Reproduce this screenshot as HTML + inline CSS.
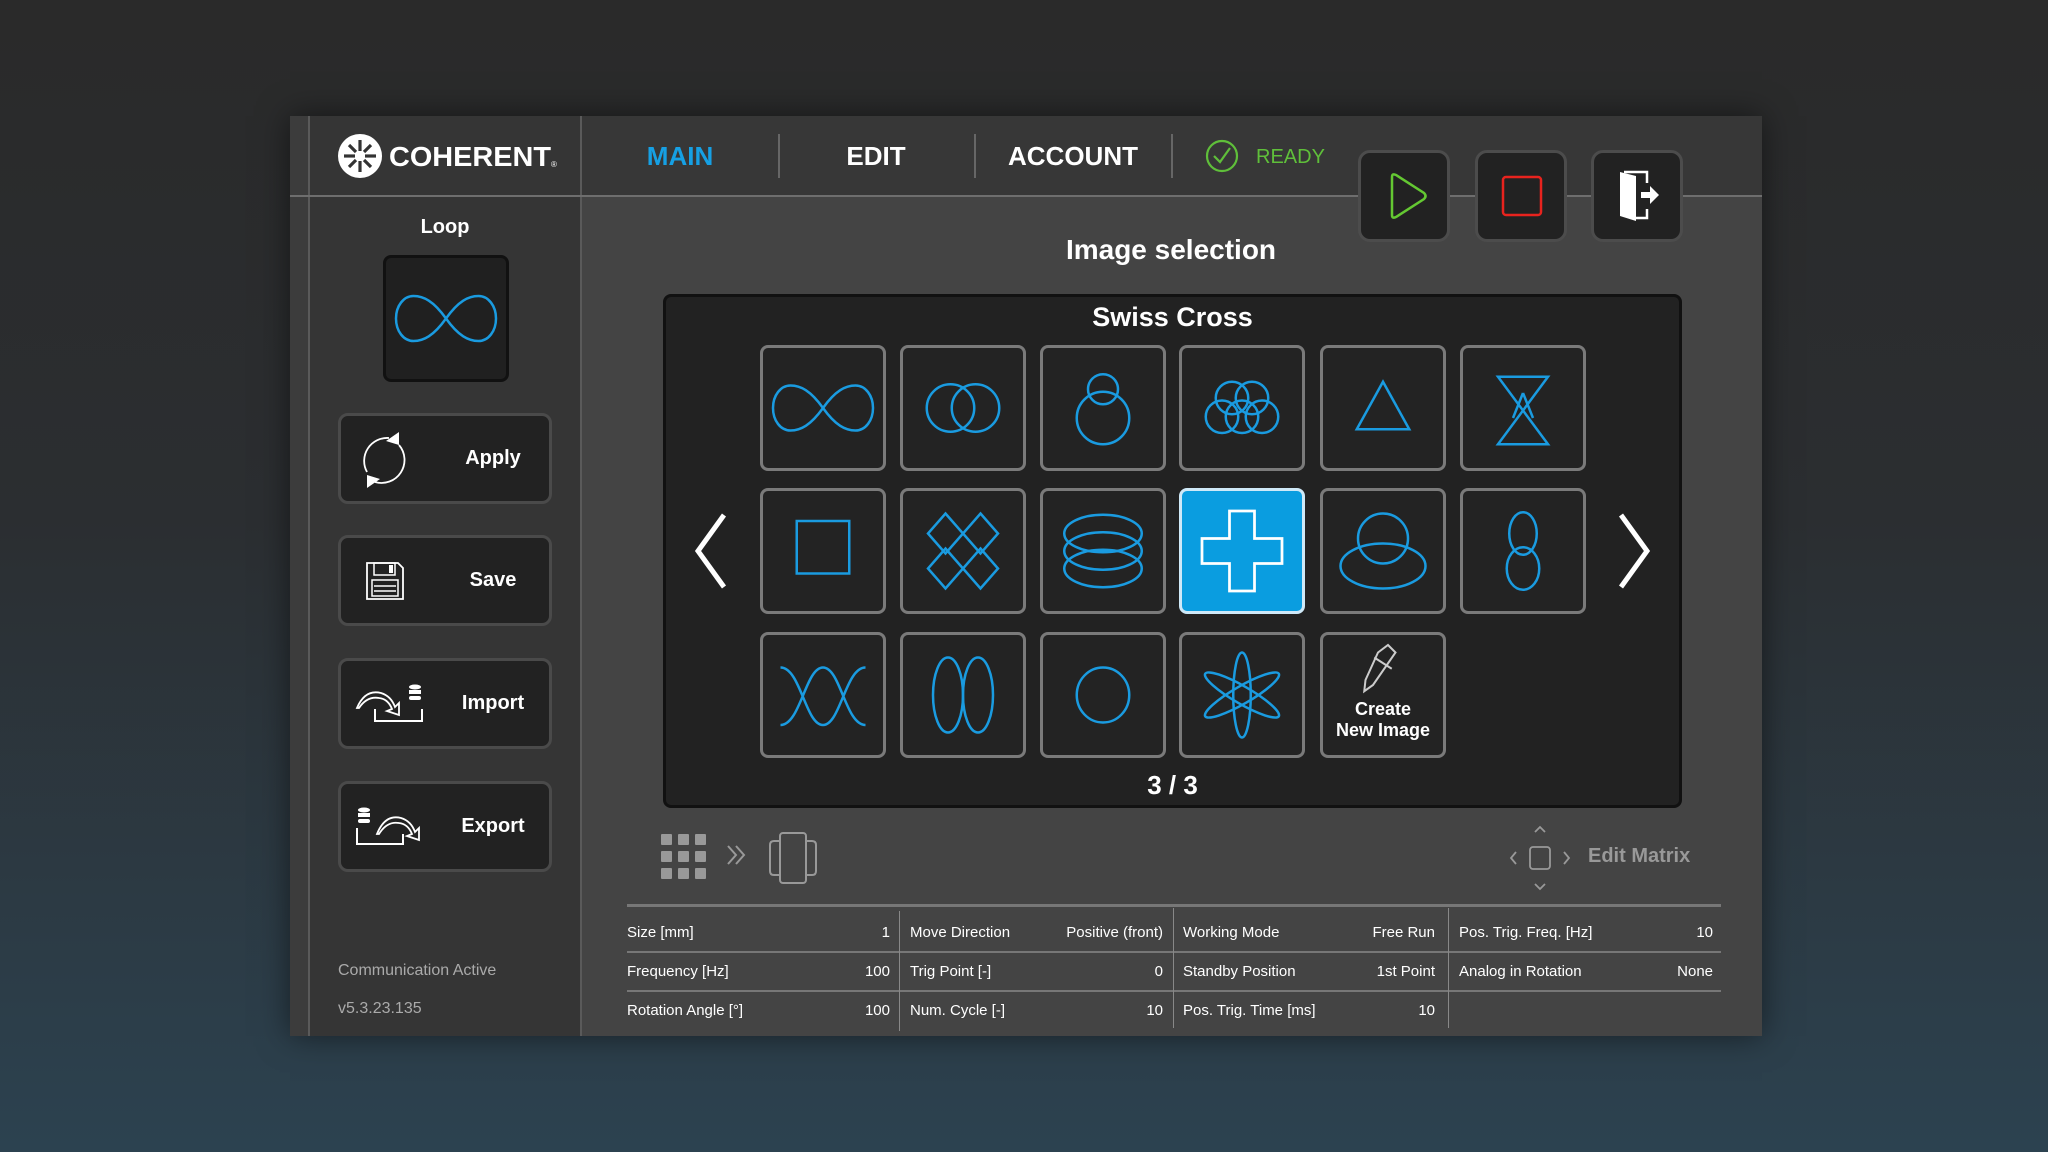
<!DOCTYPE html>
<html><head><meta charset="utf-8"><style>
*{margin:0;padding:0;box-sizing:border-box}
body{width:2048px;height:1152px;overflow:hidden;background:linear-gradient(180deg,#2a2a2a 0%,#2b2e31 45%,#2c4250 100%);font-family:"Liberation Sans Narrow","Liberation Sans",sans-serif;color:#fff;position:relative}
.a{position:absolute}
.panel{left:290px;top:116px;width:1472px;height:920px;background:#444;box-shadow:0 0 30px rgba(0,0,0,.5)}
.hdr{left:0;top:0;width:1472px;height:80px;background:#373737}
.side{left:18px;top:0;width:274px;height:920px;background:#353535;border-left:2px solid #5a5a5a;border-right:2px solid #5a5a5a}
.strip{left:0;top:0;width:18px;height:920px;background:#3c3c3c}
.hline{left:0;top:79px;width:1472px;height:2px;background:#6e6e6e}
.tab{top:12px;height:56px;font-size:26px;font-weight:bold;line-height:56px;text-align:center}
.sep{top:18px;width:2px;height:44px;background:#666}
.tb{width:92px;height:92px;background:#222;border:3px solid #4c4c4c;border-radius:12px}
.sb{left:48px;width:214px;height:91px;background:#222;border:3px solid #4a4a4a;border-radius:10px}
.sb span{position:absolute;left:112px;top:0;line-height:85px;font-size:20px;font-weight:bold;width:80px;text-align:center}
.tile{width:126px;height:126px;background:#232323;border:3px solid #7a7a7a;border-radius:8px}
.tile svg{position:absolute;left:0;top:0;width:120px;height:120px}
.sel{background:#0a9de0;border-color:#cfe9f8}
.row{left:337px;width:1094px;font-size:15px}
.cell{position:absolute;top:0;height:39px;line-height:39px}
</style></head><body>
<div class="a panel">
 <div class="a hdr"></div>
 <div class="a side"></div>
 <div class="a strip"></div>
 <div class="a hline"></div>
 <svg class="a" style="left:47px;top:11px" width="230" height="58" viewBox="0 0 230 58">
  <circle cx="23" cy="29" r="22" fill="#fff"/>
  <g stroke="#333" stroke-width="3.2">
   <line x1="23" y1="13" x2="23" y2="24"/><line x1="23" y1="34" x2="23" y2="45"/>
   <line x1="7" y1="29" x2="18" y2="29"/><line x1="28" y1="29" x2="39" y2="29"/>
   <line x1="12" y1="18" x2="19" y2="25"/><line x1="27" y1="33" x2="34" y2="40"/>
   <line x1="34" y1="18" x2="27" y2="25"/><line x1="19" y1="33" x2="12" y2="40"/>
  </g>
  <text x="52" y="39" font-family="Liberation Sans" font-weight="bold" font-size="28" fill="#fff" textLength="162" lengthAdjust="spacingAndGlyphs">COHERENT</text>
  <text x="214" y="40" font-family="Liberation Sans" font-size="8" fill="#fff">®</text>
 </svg>
 <div class="a tab" style="left:330px;width:120px;color:#16a0e4">MAIN</div>
 <div class="a sep" style="left:488px"></div>
 <div class="a tab" style="left:526px;width:120px">EDIT</div>
 <div class="a sep" style="left:684px"></div>
 <div class="a tab" style="left:713px;width:140px">ACCOUNT</div>
 <div class="a sep" style="left:881px"></div>
 <svg class="a" style="left:915px;top:23px" width="34" height="34" viewBox="0 0 34 34"><circle cx="17" cy="17" r="15" fill="none" stroke="#5fbf3a" stroke-width="2.2"/><path d="M9 17 L15 23 L25 9" fill="none" stroke="#5fbf3a" stroke-width="2.2"/></svg>
 <div class="a" style="left:966px;top:26px;font-size:20px;color:#5fbf3a;line-height:30px">READY</div>
 <div class="a tb" style="left:1068px;top:34px"><svg width="86" height="86" viewBox="0 0 86 86"><path d="M31 24 L31 62 Q31 66 35 64 L63 46 Q66 43 63 40 L35 22 Q31 20 31 24Z" fill="none" stroke="#64c832" stroke-width="2.5"/></svg></div>
 <div class="a tb" style="left:1185px;top:34px"><svg width="86" height="86" viewBox="0 0 86 86"><rect x="25" y="24" width="38" height="38" rx="3" fill="none" stroke="#e8231e" stroke-width="2.5"/></svg></div>
 <div class="a tb" style="left:1301px;top:34px"><svg width="86" height="86" viewBox="0 0 86 86"><path d="M26 19 L42 23 L42 68 L26 63Z" fill="#fff"/><path d="M30 19 H53 V30 M53 56 V65 H42" fill="none" stroke="#fff" stroke-width="2.5"/><path d="M47 39 H56 V33 L65 42 L56 51 V45 H47Z" fill="#fff"/></svg></div>
 <div class="a" style="left:18px;top:100px;width:274px;text-align:center;font-size:20px;font-weight:bold">Loop</div>
 <div class="a" style="left:93px;top:139px;width:126px;height:127px;background:#202020;border:3px solid #111;border-radius:8px">
  <svg width="120" height="121" viewBox="0 0 96 96"><path d="M48 48 C58 34 66 30 74 30 C82 30 88 38 88 48 C88 58 82 66 74 66 C66 66 58 62 48 48 C38 34 30 30 22 30 C14 30 8 38 8 48 C8 58 14 66 22 66 C30 66 38 62 48 48Z" fill="none" stroke="#1a9be0" stroke-width="2"/></svg>
 </div>
 <div class="a sb" style="top:297px"><svg class="a" style="left:14px;top:14px" width="60" height="60" viewBox="0 0 60 60"><path d="M12 42 A23 23 0 0 1 34 8" fill="none" stroke="#fff" stroke-width="1.8"/><path d="M44 15 A23 23 0 0 1 20 52" fill="none" stroke="#fff" stroke-width="1.8"/><path d="M31 11 L44 2 L44 15Z" fill="#fff"/><path d="M25 49 L12 58 L12 45Z" fill="#fff"/></svg><span>Apply</span></div>
 <div class="a sb" style="top:419px"><svg class="a" style="left:24px;top:23px" width="40" height="40" viewBox="0 0 40 40"><path d="M2 2 H33 L38 7 V38 H2Z" fill="none" stroke="#fff" stroke-width="1.8"/><rect x="9" y="2" width="21" height="12" fill="none" stroke="#fff" stroke-width="1.5"/><rect x="24" y="4" width="4" height="8" fill="#fff"/><rect x="7" y="19" width="26" height="16" fill="none" stroke="#fff" stroke-width="1.5"/><path d="M9 25 H31 M9 30 H31" stroke="#fff" stroke-width="1.5"/></svg><span>Save</span></div>
 <div class="a sb" style="top:542px"><svg class="a" style="left:14px;top:20px" width="72" height="48" viewBox="0 0 72 48"><path d="M2 27 Q10 8 26 12 Q36 15 40 26 L44 22 L44 34 L32 30 L37 28 Q33 18 24 17 Q12 15 4 27Z" fill="none" stroke="#fff" stroke-width="1.8"/><path d="M20 28 V40 H67 V28" fill="none" stroke="#fff" stroke-width="2"/><ellipse cx="60" cy="6" rx="6" ry="2.5" fill="#fff"/><rect x="54" y="9" width="12" height="4" fill="#fff"/><rect x="54" y="15" width="12" height="4" rx="2" fill="#fff"/></svg><span>Import</span></div>
 <div class="a sb" style="top:665px"><svg class="a" style="left:14px;top:20px" width="72" height="48" viewBox="0 0 72 48"><ellipse cx="9" cy="6" rx="6" ry="2.5" fill="#fff"/><rect x="3" y="9" width="12" height="4" fill="#fff"/><rect x="3" y="15" width="12" height="4" rx="2" fill="#fff"/><path d="M22 30 Q30 10 46 14 Q56 17 60 28 L64 24 L64 36 L52 32 L57 30 Q53 20 44 19 Q32 17 24 30Z" fill="none" stroke="#fff" stroke-width="1.8"/><path d="M2 24 V40 H48 V30" fill="none" stroke="#fff" stroke-width="2"/></svg><span>Export</span></div>
 <div class="a" style="left:48px;top:846px;font-family:'Liberation Sans',sans-serif;font-size:16px;color:#aaa">Communication Active</div>
 <div class="a" style="left:48px;top:884px;font-family:'Liberation Sans',sans-serif;font-size:16px;color:#aaa">v5.3.23.135</div>
 <div class="a" style="left:381px;top:118px;width:1000px;text-align:center;font-size:28px;font-weight:bold;font-family:'Liberation Sans',sans-serif">Image selection</div>
 <div class="a" style="left:373px;top:178px;width:1019px;height:514px;background:#222;border:3px solid #111;border-radius:8px"></div>
 <div class="a" style="left:373px;top:186px;width:1019px;text-align:center;font-size:27px;font-weight:bold;font-family:'Liberation Sans',sans-serif">Swiss Cross</div>
 <svg class="a" style="left:400px;top:395px" width="40" height="80" viewBox="0 0 40 80"><path d="M34 4 L8 40 L34 76" fill="none" stroke="#fff" stroke-width="5"/></svg>
 <svg class="a" style="left:1325px;top:395px" width="40" height="80" viewBox="0 0 40 80"><path d="M6 4 L32 40 L6 76" fill="none" stroke="#fff" stroke-width="5"/></svg>
 <div class="a" style="left:373px;top:654px;width:1019px;text-align:center;font-size:26px;font-weight:bold;font-family:'Liberation Sans',sans-serif">3 / 3</div>
 <div class="a tile" style="left:470px;top:229px"><svg viewBox="0 0 96 96"><path d="M48 48 C58 34 66 30 74 30 C82 30 88 38 88 48 C88 58 82 66 74 66 C66 66 58 62 48 48 C38 34 30 30 22 30 C14 30 8 38 8 48 C8 58 14 66 22 66 C30 66 38 62 48 48Z" fill="none" stroke="#1a9be0" stroke-width="2"/></svg></div>
 <div class="a tile" style="left:610px;top:229px"><svg viewBox="0 0 96 96" fill="none" stroke="#1a9be0" stroke-width="2"><circle cx="38" cy="48" r="19"/><circle cx="58" cy="48" r="19"/></svg></div>
 <div class="a tile" style="left:750px;top:229px"><svg viewBox="0 0 96 96" fill="none" stroke="#1a9be0" stroke-width="2"><circle cx="48" cy="33" r="12"/><circle cx="48" cy="56" r="21"/></svg></div>
 <div class="a tile" style="left:889px;top:229px"><svg viewBox="0 0 96 96" fill="none" stroke="#1a9be0" stroke-width="2"><circle cx="40" cy="40" r="13"/><circle cx="56" cy="40" r="13"/><circle cx="32" cy="55" r="13"/><circle cx="48" cy="55" r="13"/><circle cx="64" cy="55" r="13"/></svg></div>
 <div class="a tile" style="left:1030px;top:229px"><svg viewBox="0 0 96 96" fill="none" stroke="#1a9be0" stroke-width="2"><path d="M48 27 L27 65 L69 65Z"/></svg></div>
 <div class="a tile" style="left:1170px;top:229px"><svg viewBox="0 0 96 96" fill="none" stroke="#1a9be0" stroke-width="2"><path d="M28 23 H68 L28 77 H68Z M48 36 L40 56 M48 36 L56 56"/></svg></div>
 <div class="a tile" style="left:470px;top:372px"><svg viewBox="0 0 96 96" fill="none" stroke="#1a9be0" stroke-width="2"><rect x="27" y="24" width="42" height="42"/></svg></div>
 <div class="a tile" style="left:610px;top:372px"><svg viewBox="0 0 96 96" fill="none" stroke="#1a9be0" stroke-width="2"><path d="M34 18 L48 34 L34 50 L20 34Z M62 18 L76 34 L62 50 L48 34Z M34 46 L48 62 L34 78 L20 62Z M62 46 L76 62 L62 78 L48 62Z"/></svg></div>
 <div class="a tile" style="left:750px;top:372px"><svg viewBox="0 0 96 96" fill="none" stroke="#1a9be0" stroke-width="2"><ellipse cx="48" cy="34" rx="31" ry="15"/><ellipse cx="48" cy="48" rx="31" ry="15"/><ellipse cx="48" cy="62" rx="31" ry="15"/></svg></div>
 <div class="a tile sel" style="left:889px;top:372px"><svg viewBox="0 0 96 96" fill="none" stroke="#fff" stroke-width="2.2"><path d="M38 16 H58 V38 H80 V58 H58 V80 H38 V58 H16 V38 H38Z"/></svg></div>
 <div class="a tile" style="left:1030px;top:372px"><svg viewBox="0 0 96 96" fill="none" stroke="#1a9be0" stroke-width="2"><circle cx="48" cy="38" r="20"/><ellipse cx="48" cy="60" rx="34" ry="18"/></svg></div>
 <div class="a tile" style="left:1170px;top:372px"><svg viewBox="0 0 96 96" fill="none" stroke="#1a9be0" stroke-width="2"><ellipse cx="48" cy="34" rx="11" ry="17"/><ellipse cx="48" cy="62" rx="13" ry="17"/></svg></div>
 <div class="a tile" style="left:470px;top:516px"><svg viewBox="0 0 96 96" fill="none" stroke="#1a9be0" stroke-width="2"><path d="M14 26 C30 26 34 72 48 72 C62 72 66 26 82 26 M14 72 C30 72 34 26 48 26 C62 26 66 72 82 72"/></svg></div>
 <div class="a tile" style="left:610px;top:516px"><svg viewBox="0 0 96 96" fill="none" stroke="#1a9be0" stroke-width="2"><ellipse cx="36" cy="48" rx="12" ry="30"/><ellipse cx="60" cy="48" rx="12" ry="30"/></svg></div>
 <div class="a tile" style="left:750px;top:516px"><svg viewBox="0 0 96 96" fill="none" stroke="#1a9be0" stroke-width="2"><ellipse cx="48" cy="48" rx="21" ry="22"/></svg></div>
 <div class="a tile" style="left:889px;top:516px"><svg viewBox="0 0 96 96" fill="none" stroke="#1a9be0" stroke-width="2"><ellipse cx="48" cy="48" rx="7" ry="34"/><ellipse cx="48" cy="48" rx="7" ry="34" transform="rotate(60 48 48)"/><ellipse cx="48" cy="48" rx="7" ry="34" transform="rotate(-60 48 48)"/></svg></div>
 <div class="a tile" style="left:1030px;top:516px"><svg viewBox="0 0 96 96" fill="none" stroke="#ccc" stroke-width="1.6"><path d="M44 14 L52 8 L58 14 L40 40 L33 45 L34 36Z M41 18 L55 27"/></svg>
  <div class="a" style="left:0;top:64px;width:120px;text-align:center;font-size:18px;font-weight:bold;line-height:21px">Create<br>New Image</div></div>
 <svg class="a" style="left:371px;top:718px" width="60" height="50" viewBox="0 0 60 50" fill="#999"><rect x="0" y="0" width="11" height="11" rx="1"/><rect x="17" y="0" width="11" height="11" rx="1"/><rect x="34" y="0" width="11" height="11" rx="1"/><rect x="0" y="17" width="11" height="11" rx="1"/><rect x="17" y="17" width="11" height="11" rx="1"/><rect x="34" y="17" width="11" height="11" rx="1"/><rect x="0" y="34" width="11" height="11" rx="1"/><rect x="17" y="34" width="11" height="11" rx="1"/><rect x="34" y="34" width="11" height="11" rx="1"/></svg>
 <svg class="a" style="left:436px;top:727px" width="24" height="24" viewBox="0 0 24 24" fill="none" stroke="#999" stroke-width="2"><path d="M2 3 L10 12 L2 21 M10 3 L18 12 L10 21"/></svg>
 <svg class="a" style="left:477px;top:716px" width="52" height="52" viewBox="0 0 52 52" fill="none" stroke="#999" stroke-width="2"><rect x="13" y="1" width="26" height="50" rx="3"/><path d="M13 9 H7 Q3 9 3 13 V39 Q3 43 7 43 H13 M39 9 H45 Q49 9 49 13 V39 Q49 43 45 43 H39"/></svg>
 <svg class="a" style="left:1218px;top:708px" width="64" height="68" viewBox="0 0 64 68" fill="none" stroke="#999" stroke-width="1.8"><path d="M27 8 L32 3 L37 8 M27 60 L32 65 L37 60 M8 28 L3 34 L8 40 M56 28 L61 34 L56 40"/><rect x="22" y="23" width="20" height="22" rx="3"/></svg>
 <div class="a" style="left:1298px;top:729px;font-size:20px;font-weight:bold;color:#999">Edit Matrix</div>
 <div class="a" style="left:337px;top:788px;width:1094px;height:3px;background:#777"></div>
 <div class="a" style="left:337px;top:835px;width:1094px;height:2px;background:#777"></div>
 <div class="a" style="left:337px;top:874px;width:1094px;height:2px;background:#777"></div>
 <div class="a" style="left:609px;top:795px;width:1px;height:120px;background:#888"></div>
 <div class="a" style="left:883px;top:792px;width:1px;height:120px;background:#888"></div>
 <div class="a" style="left:1158px;top:792px;width:1px;height:120px;background:#888"></div>
 <div class="a row" style="top:797px">
  <div class="cell" style="left:0">Size [mm]</div><div class="cell" style="left:0;width:263px;text-align:right">1</div>
  <div class="cell" style="left:283px">Move Direction</div><div class="cell" style="left:283px;width:253px;text-align:right">Positive (front)</div>
  <div class="cell" style="left:556px">Working Mode</div><div class="cell" style="left:556px;width:252px;text-align:right">Free Run</div>
  <div class="cell" style="left:832px">Pos. Trig. Freq. [Hz]</div><div class="cell" style="left:832px;width:254px;text-align:right">10</div>
 </div>
 <div class="a row" style="top:836px">
  <div class="cell" style="left:0">Frequency [Hz]</div><div class="cell" style="left:0;width:263px;text-align:right">100</div>
  <div class="cell" style="left:283px">Trig Point [-]</div><div class="cell" style="left:283px;width:253px;text-align:right">0</div>
  <div class="cell" style="left:556px">Standby Position</div><div class="cell" style="left:556px;width:252px;text-align:right">1st Point</div>
  <div class="cell" style="left:832px">Analog in Rotation</div><div class="cell" style="left:832px;width:254px;text-align:right">None</div>
 </div>
 <div class="a row" style="top:875px">
  <div class="cell" style="left:0">Rotation Angle [°]</div><div class="cell" style="left:0;width:263px;text-align:right">100</div>
  <div class="cell" style="left:283px">Num. Cycle [-]</div><div class="cell" style="left:283px;width:253px;text-align:right">10</div>
  <div class="cell" style="left:556px">Pos. Trig. Time [ms]</div><div class="cell" style="left:556px;width:252px;text-align:right">10</div>
 </div>
</div>
</body></html>
